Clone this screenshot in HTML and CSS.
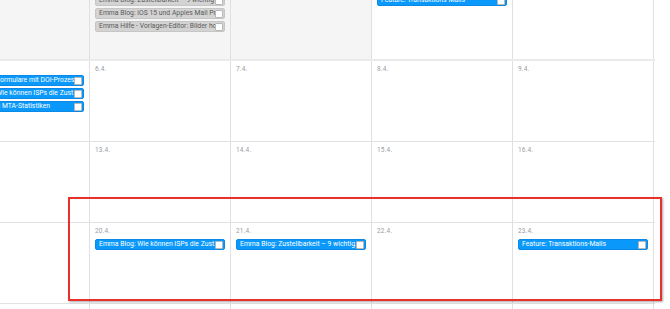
FILE: index.html
```html
<!DOCTYPE html>
<html lang="de">
<head>
<meta charset="utf-8">
<link rel="stylesheet" href="styles.css">
</head>
<body>
<div class="viewport">
  <div class="calendar">
    <div class="week first">
      <div class="day outside">
        <span class="date">29.3.</span>
        <div class="events lift">
          <div class="event grey"><span class="title">Emma Blog: Wie können ISPs die Zust.</span><span class="check"></span></div>
        </div>
      </div>
      <div class="day outside">
        <span class="date">30.3.</span>
        <div class="events">
          <div class="event grey"><span class="title">Emma Blog: Zustellbarkeit – 9 wichtig</span><span class="check"></span></div>
          <div class="event grey"><span class="title">Emma Blog: iOS 15 und Apples Mail Privacy</span><span class="check"></span></div>
          <div class="event grey"><span class="title">Emma Hilfe - Vorlagen-Editor: Bilder hochladen</span><span class="check"></span></div>
        </div>
      </div>
      <div class="day outside">
        <span class="date">31.3.</span>
      </div>
      <div class="day">
        <span class="date">1.4.</span>
        <div class="events">
          <div class="event"><span class="title">Feature: Transaktions-Mails</span><span class="check"></span></div>
        </div>
      </div>
      <div class="day">
        <span class="date">2.4.</span>
      </div>
    </div>
    <div class="week">
      <div class="day">
        <span class="date">5.4.</span>
        <div class="events raise">
          <div class="event"><span class="title">Emma Blog: Formulare mit DOI-Prozess</span><span class="check"></span></div>
          <div class="event"><span class="title">Emma Blog: Wie können ISPs die Zust.</span><span class="check"></span></div>
          <div class="event"><span class="title">Feature: Neue MTA-Statistiken</span><span class="check"></span></div>
        </div>
      </div>
      <div class="day"><span class="date">6.4.</span></div>
      <div class="day"><span class="date">7.4.</span></div>
      <div class="day"><span class="date">8.4.</span></div>
      <div class="day"><span class="date">9.4.</span></div>
    </div>
    <div class="week">
      <div class="day"><span class="date">12.4.</span></div>
      <div class="day"><span class="date">13.4.</span></div>
      <div class="day"><span class="date">14.4.</span></div>
      <div class="day"><span class="date">15.4.</span></div>
      <div class="day"><span class="date">16.4.</span></div>
    </div>
    <div class="week">
      <div class="day"><span class="date">19.4.</span></div>
      <div class="day">
        <span class="date">20.4.</span>
        <div class="events">
          <div class="event"><span class="title">Emma Blog: Wie können ISPs die Zust.</span><span class="check"></span></div>
        </div>
      </div>
      <div class="day">
        <span class="date">21.4.</span>
        <div class="events">
          <div class="event"><span class="title">Emma Blog: Zustellbarkeit – 9 wichtig.</span><span class="check"></span></div>
        </div>
      </div>
      <div class="day"><span class="date">22.4.</span></div>
      <div class="day">
        <span class="date">23.4.</span>
        <div class="events">
          <div class="event"><span class="title">Feature: Transaktions-Mails</span><span class="check"></span></div>
        </div>
      </div>
    </div>
    <div class="week">
      <div class="day"></div>
      <div class="day"></div>
      <div class="day"></div>
      <div class="day"></div>
      <div class="day"></div>
    </div>
  </div>
  <div class="highlight"></div>
</div>
</body>
</html>
```

FILE: styles.css
```css
* { box-sizing: border-box; }
html, body {
  margin: 0;
  padding: 0;
  background: #ffffff;
  font-family: "Roboto", "Noto Sans", sans-serif;
}
.viewport {
  position: relative;
  width: 670px;
  height: 309px;
  overflow: hidden;
  background: #ffffff;
}
.calendar {
  margin-top: -21px;
  margin-left: -51px;
  width: 706px;
  display: flex;
  flex-direction: column;
}
.week {
  display: grid;
  grid-template-columns: repeat(5, 141px);
  height: 81px;
  border-bottom: 1px solid #e2e2e6;
}
.week.first {
  height: 82px;
  border-bottom: 2px solid #ebebee;
}
.day {
  border-right: 1px solid #e0e0e4;
  padding: 4px 5px 0 5px;
  display: flex;
  flex-direction: column;
  min-width: 0;
}
.day.outside {
  background: #f5f5f5;
}
.date {
  font-size: 6.5px;
  line-height: 9px;
  color: #9a9ca4;
  letter-spacing: 0.2px;
}
.events {
  margin-top: 3px;
  display: flex;
  flex-direction: column;
  gap: 2px;
}
.events.lift { margin-top: -3px; }
.events.raise { margin-top: 1px; }
.event {
  display: flex;
  align-items: center;
  height: 11px;
  background: #0a99fb;
  border: 1px solid #0a8ae6;
  border-radius: 2px;
  color: #ffffff;
  font-size: 6.8px;
  line-height: 9px;
  letter-spacing: 0.02px;
  padding: 0 1px 0 3px;
  overflow: hidden;
}
.event.grey {
  background: #d3d3d3;
  border-color: #c6c6c6;
  color: #5a5a5a;
}
.title {
  flex: 1;
  min-width: 0;
  white-space: nowrap;
  overflow: hidden;
}
.check {
  flex: none;
  width: 8px;
  height: 8px;
  background: #ffffff;
  border: 1px solid #b8b8b8;
  border-radius: 1px;
}
.highlight {
  position: absolute;
  left: 68px;
  top: 197px;
  width: 594px;
  height: 104px;
  border: 2px solid #e8302c;
  box-shadow: 1px 1px 2px rgba(0, 0, 0, 0.35);
  pointer-events: none;
}
```
